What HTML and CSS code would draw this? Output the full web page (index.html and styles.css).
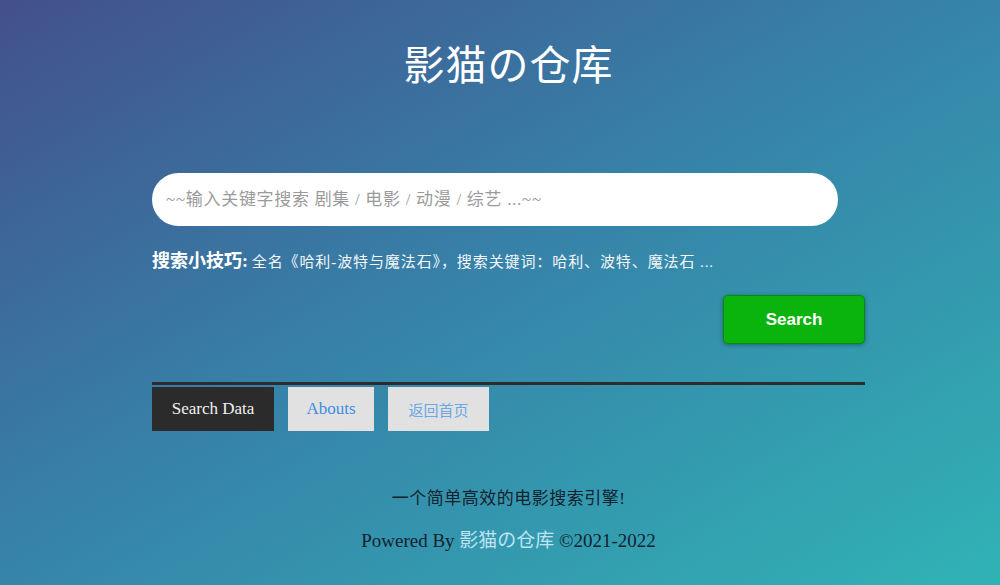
FILE: index.html
```html
<!DOCTYPE html>
<html lang="zh-CN">
<head>
<meta charset="utf-8">
<title>影猫の仓库</title>
<link rel="stylesheet" href="styles.css">
</head>
<body>
<div class="page">
  <div class="wrap">
    <h1 class="title">影猫の仓库</h1>
    <div class="search-box">
      <input class="search-input" type="text" placeholder="~~输入关键字搜索 剧集 / 电影 / 动漫 / 综艺 ...~~">
    </div>
    <p class="tips"><b>搜索小技巧:</b> <span class="tip-text">全名《哈利-波特与魔法石》，搜索关键词：哈利、波特、魔法石 ...</span></p>
    <div class="actions">
      <button class="btn-search" type="button">Search</button>
    </div>
    <div class="tabs">
      <a class="tab tab-active">Search Data</a>
      <a class="tab tab-about">Abouts</a>
      <a class="tab tab-home">返回首页</a>
    </div>
    <footer class="footer">
      <p class="slogan">一个简单高效的电影搜索引擎!</p>
      <p class="powered">Powered By <span class="brand">影猫の仓库</span> ©2021-2022</p>
    </footer>
  </div>
</div>
</body>
</html>
```

FILE: styles.css
```css
html, body {
  margin: 0;
  padding: 0;
  height: 100%;
}
body {
  font-family: "Liberation Serif", "Noto Sans CJK SC", serif;
  background: linear-gradient(to bottom right, #43508b 0%, #3780a8 45%, #30b3b5 100%);
  color: #fff;
  overflow: hidden;
}
.page {
  min-height: 585px;
}
.wrap {
  width: 713px;
  margin: 0 auto;
  padding-left: 17px;
  padding-top: 38px;
}
.title {
  margin: 0;
  text-align: center;
  font-weight: 400;
  font-size: 41px;
  line-height: 56px;
  letter-spacing: 1px;
  color: #fff;
}
.search-box {
  margin-top: 79px;
  width: 686px;
}
.search-input {
  box-sizing: border-box;
  width: 100%;
  height: 53px;
  border: none;
  border-radius: 27px;
  background: #fff;
  padding: 0 14px;
  font-family: "Liberation Serif", "Noto Sans CJK SC", serif;
  font-size: 17px;
  letter-spacing: 0.7px;
  color: #333;
  outline: none;
}
.search-input::placeholder {
  color: #9a9a9a;
}
.tips {
  margin: 22px 0 0;
  font-size: 15px;
  line-height: 26px;
  color: #f4f6f8;
}
.tips b {
  font-size: 18px;
  font-weight: 700;
  color: #fff;
}
.tip-text {
  letter-spacing: 0.9px;
}
.actions {
  display: flex;
  justify-content: flex-end;
  margin-top: 20px;
}
.btn-search {
  width: 142px;
  height: 49px;
  background: #0bb40c;
  border: 1px solid #0a8a10;
  border-radius: 5px;
  color: #fff;
  font-family: "Liberation Sans", Arial, sans-serif;
  font-size: 17px;
  font-weight: 700;
  box-shadow: 0 1px 4px rgba(0, 0, 0, 0.35);
  cursor: pointer;
}
.tabs {
  display: flex;
  gap: 14px;
  margin-top: 38px;
  border-top: 3px solid #2c2c2c;
  padding-top: 2px;
}
.tab {
  display: flex;
  align-items: center;
  justify-content: center;
  height: 44px;
  font-size: 17px;
  text-decoration: none;
  background: #e1e1e1;
}
.tab-active {
  width: 122px;
  background: #2b2b2b;
  color: #f0f0f0;
}
.tab-about {
  width: 86px;
  color: #3d8ee4;
}
.tab-home {
  width: 101px;
  color: #6aa8e6;
  font-size: 15px;
}
.footer {
  margin-top: 55px;
  text-align: center;
  color: #14222f;
}
.slogan {
  margin: 0;
  font-size: 17px;
  line-height: 26px;
  letter-spacing: 0.5px;
}
.powered {
  margin: 16px 0 0;
  font-size: 19px;
  line-height: 26px;
}
.brand {
  color: #bfe3f2;
}
```
